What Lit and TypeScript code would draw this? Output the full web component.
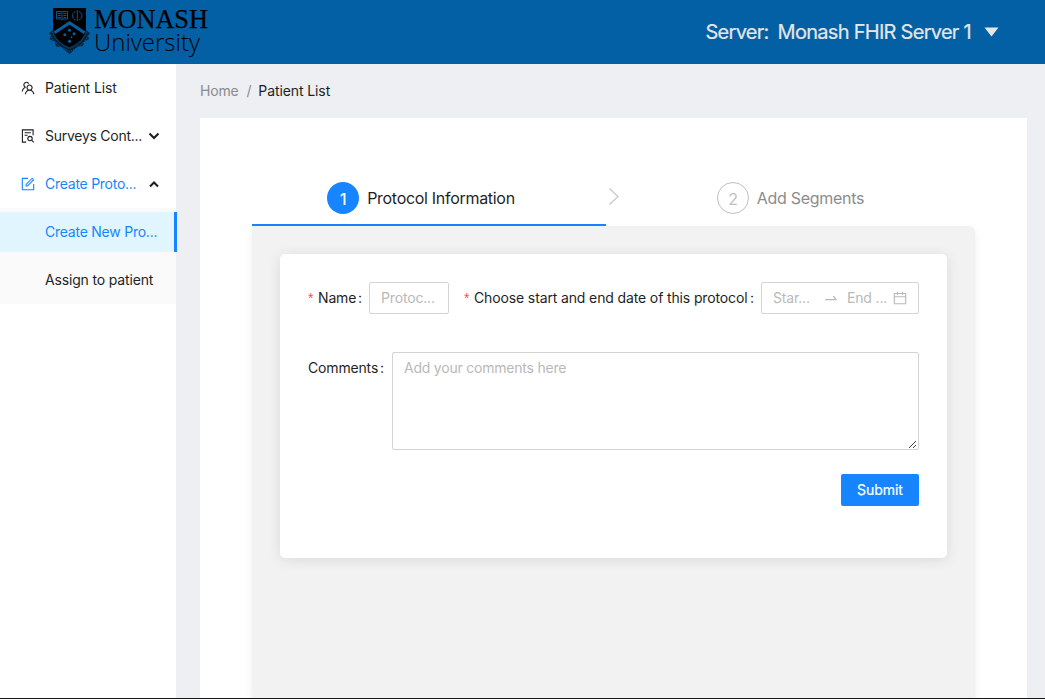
import { LitElement, html, css, svg } from "lit";
import { customElement } from "lit/decorators.js";

const ICONS: Record<string, string[]> = {
  team: [
    "M824.2 699.9a301.55 301.55 0 00-86.4-60.4C783.1 602.8 812 546.8 812 484c0-110.8-92.4-201.7-203.2-200-109.1 1.7-197 90.6-197 200 0 62.8 29 118.8 74.2 155.5a300.95 300.95 0 00-86.4 60.4C345 754.6 314 826.8 312 903.8a8 8 0 008 8.2h56c4.3 0 7.9-3.4 8-7.7 1.9-58 25.4-112.3 66.7-153.5A226.62 226.62 0 01612 684c60.9 0 118.2 23.7 161.3 66.8C814.6 792 838 846.3 840 904.3c.1 4.3 3.7 7.7 8 7.7h56a8 8 0 008-8.2c-2-77-33-149.2-87.8-203.9zM612 612c-34.2 0-66.4-13.3-90.5-37.5a126.86 126.86 0 01-37.5-91.8c.3-32.8 13.4-64.5 36.3-88 24-24.6 56.1-38.3 90.4-38.7 33.9-.3 66.8 12.9 91 36.6 24.8 24.3 38.4 56.8 38.4 91.4 0 34.2-13.3 66.3-37.5 90.5A127.3 127.3 0 01612 612zM361.5 510.4c-.9-8.7-1.4-17.5-1.4-26.4 0-15.9 1.5-31.4 4.3-46.5.7-3.6-1.2-7.3-4.5-8.8-13.6-6.1-26.1-14.5-36.9-25.1a127.54 127.54 0 01-38.7-95.4c.9-32.1 13.8-62.6 36.3-85.6 24.7-25.3 57.9-39.1 93.2-38.7 31.9.3 62.7 12.6 86 34.4 7.9 7.4 14.7 15.6 20.4 24.4 2 3.1 5.9 4.4 9.3 3.2 17.6-6.1 36.2-10.4 55.3-12.4 5.6-.6 8.8-6.6 6.3-11.6-32.5-64.3-98.9-108.7-175.7-109.9-110.9-1.7-203.3 89.2-203.3 199.9 0 62.8 28.9 118.8 74.2 155.5-31.8 14.7-61.1 35-86.5 60.4-54.8 54.7-85.8 126.9-87.8 204a8 8 0 008 8.2h56.1c4.3 0 7.9-3.4 8-7.7 1.9-58 25.4-112.3 66.7-153.5 29.4-29.4 65.4-49.8 104.7-59.7 3.9-1 6.5-4.7 6-8.7z",
  ],
  edit: [
    "M904 512h-56c-4.4 0-8 3.6-8 8v320H184V184h320c4.4 0 8-3.6 8-8v-56c0-4.4-3.6-8-8-8H144c-17.7 0-32 14.3-32 32v736c0 17.7 14.3 32 32 32h736c17.7 0 32-14.3 32-32V520c0-4.4-3.6-8-8-8z",
    "M355.9 534.9L354 653.8c-.1 8.9 7.1 16.2 16 16.2h.4l118-2.9c2-.1 4-.9 5.4-2.3l415.9-415c3.1-3.1 3.1-8.2 0-11.3L785.4 114.3c-1.6-1.6-3.6-2.3-5.7-2.3s-4.1.8-5.7 2.3l-415.8 415a8.3 8.3 0 00-2.3 5.6zm63.5 23.6L779.7 199l45.2 45.1-360.5 359.7-45.7 1.1.7-46.4z",
  ],
  calendar: [
    "M880 184H712v-64c0-4.4-3.6-8-8-8h-56c-4.4 0-8 3.6-8 8v64H384v-64c0-4.4-3.6-8-8-8h-56c-4.4 0-8 3.6-8 8v64H144c-17.7 0-32 14.3-32 32v664c0 17.7 14.3 32 32 32h736c17.7 0 32-14.3 32-32V216c0-17.7-14.3-32-32-32zm-40 656H184V460h656v380zM184 392V256h128v48c0 4.4 3.6 8 8 8h56c4.4 0 8-3.6 8-8v-48h256v48c0 4.4 3.6 8 8 8h56c4.4 0 8-3.6 8-8v-48h128v136H184z",
  ],
  swap: [
    "M873.1 596.2l-164-208A32 32 0 00684 376h-64.8c-6.7 0-10.4 7.7-6.3 13l144.3 183H152c-4.4 0-8 3.6-8 8v60c0 4.4 3.6 8 8 8h695.9c26.8 0 41.7-30.8 25.2-51.8z",
  ],
};

const icon = (name: string, size: number) => html`
  <svg class="icon" width=${size} height=${size} viewBox=${name === "swap" ? "0 0 1024 1024" : "64 64 896 896"} fill="currentColor">
    ${ICONS[name].map((d) => svg`<path d=${d} />`)}
  </svg>
`;

const surveyIcon = html`
  <svg class="icon" width="14" height="14" viewBox="0 0 14 14" fill="none" stroke="currentColor" stroke-width="1.1">
    <path d="M5.2 13.1H1.4V.9h10.7v5.3" />
    <path d="M3.6 3.8h6.2M3.6 6.3h3" />
    <circle cx="9" cy="9.6" r="2.2" />
    <path d="M10.6 11.2l2.2 2.2" />
  </svg>
`;

const chevron = (d: string) => html`
  <svg class="icon" width="12" height="12" viewBox="0 0 12 12" fill="none" stroke="#1d1d1d" stroke-width="2">
    <path d=${d} />
  </svg>
`;

const logo = html`
  <svg class="logo" width="164" height="52" viewBox="0 0 164 52">
    <path d="M6 2h33v21.500c0 8-7 13.500-16.500 18C13 37 6 31.500 6 23.500z" fill="#000" />
    <path d="M2 27l4.500-3c1.500 8 7.500 13.500 16 17.500 8.500-4 14.500-9.500 16-17.500l4.500 3-2 3 1 3-5 3-1 4-5 .5-8.500 7.500L14 41l-5-.5L8 36l-5.500-3 1.500-3z" fill="#03223a" />
    <path d="M3.500 28.500c3 8.500 10 13 19 17 9-4 16-8.500 19-17M5.500 26c3 8.500 9 13 17 16.500 8-3.500 14-8 17-16.500" fill="none" stroke="#0460a5" stroke-width=".8" stroke-dasharray="1.500 1" />
    <path d="M8 16.500h29v7C36 31 30.500 36 22.500 40 14.500 36 9 31 8 23.500z" fill="#000" />
    <path d="M7.500 26.800L22.500 16.800 37.500 26.800" fill="none" stroke="#0460a5" stroke-width="3" />
    <g fill="none" stroke="#0460a5" stroke-width=".9">
      <path d="M9.500 5.500h4.500l1 .7 1-.7h4.500v7.500H16l-1 .7-1-.7H9.500zM15 6.500v6.500M11 7.500h2.800M11 9.500h2.800M11 11.500h2.800M16.500 7.500h2.800M16.500 9.500h2.800M16.500 11.500h2.800" />
      <path d="M28.500 5.500c-4 1.500-4 7 0 8.500M32 5.500c4 1.500 4 7 0 8.500M30.300 4v11" />
    </g>
    <g fill="#0460a5">
      <circle cx="22.500" cy="24.300" r="1.500" />
      <circle cx="17.800" cy="28.800" r="1.500" />
      <circle cx="27" cy="27.800" r="1.500" />
      <circle cx="24.500" cy="31.200" r=".9" />
      <circle cx="22.500" cy="35.300" r="1.600" />
    </g>
    <text class="logo-top" x="47" y="21.500" textLength="114" lengthAdjust="spacingAndGlyphs">MONASH</text>
    <text class="logo-bottom" x="47" y="44.500" textLength="106" lengthAdjust="spacingAndGlyphs">University</text>
  </svg>
`;

@customElement("app-root")
export class AppRoot extends LitElement {
  static styles = css`
    :host {
      display: flex;
      flex-direction: column;
      height: 700px;
      overflow: hidden;
      box-sizing: border-box;
      font-family: Inter, "Liberation Sans", sans-serif;
      font-size: 14px;
      letter-spacing: -0.16px;
      line-height: 22px;
      color: #1f1f1f;
      background: #edeff3;
    }
    * { box-sizing: border-box; }
    .icon { display: block; flex: none; }
    header {
      flex: none;
      height: 64px;
      background: #0460a5;
      display: flex;
      justify-content: space-between;
      padding: 6px 46px 0 47px;
    }
    .logo { display: block; overflow: visible; }
    .logo-top { font: 28px "Liberation Serif", serif; stroke: #000; stroke-width: 0.25px; letter-spacing: 0; }
    .logo-bottom { font: 300 24.5px "Open Sans", sans-serif; letter-spacing: 0; }
    .server {
      display: flex;
      align-items: center;
      height: 52px;
      font-size: 20px;
      letter-spacing: -0.72px;
      color: #e6e6e6;
      -webkit-text-stroke: 0.2px #e6e6e6;
    }
    .server-label { margin-right: 9px; }
    .caret { margin-left: 13px; display: block; }
    .body { flex: 1; display: flex; min-height: 0; }
    aside { width: 176px; flex: none; background: #fff; padding-top: 4px; }
    .item {
      display: flex;
      align-items: center;
      height: 40px;
      margin-bottom: 8px;
      padding-left: 21px;
      white-space: nowrap;
    }
    .label { margin-left: 10px; width: 98px; margin-right: 5px; flex: none; }
    .label.home { letter-spacing: -0.1px; }
    .label.tight { letter-spacing: -0.26px; }
    .item.open { color: #1785ff; margin-bottom: 4px; }
    .submenu { background: #fafafa; padding: 4px 0; height: 96px; }
    .sub { display: flex; align-items: center; height: 40px; padding-left: 45px; white-space: nowrap; }
    .sub.selected {
      width: 177px;
      background: #e1f5ff;
      border-right: 3px solid #1785ff;
      color: #1785ff;
      margin-bottom: 8px;
      letter-spacing: -0.24px;
    }
    main { flex: 1; padding: 16px 18px 0 24px; display: flex; flex-direction: column; min-width: 0; }
    .crumbs { display: flex; gap: 8px; height: 22px; color: #8a8b8d; margin-bottom: 16px; }
    .crumbs span:first-child { letter-spacing: -0.2px; }
    .crumbs .here { color: #1f1f1f; letter-spacing: -0.1px; margin-left: -1px; }
    .panel { flex: 1; background: #fff; padding: 64px 52px 0; display: flex; flex-direction: column; }
    .steps { display: flex; height: 44px; font-size: 16px; letter-spacing: -0.3px; }
    .step { flex: 1; display: flex; justify-content: center; height: 32px; align-items: center; gap: 8px; }
    .step.active { flex: none; width: 354px; height: 44px; padding: 0 20px 10px 4px; padding: 0 16px 10px 0; border-bottom: 2px solid #1785ff; }
    .step.next { color: #8c8c8c; padding-right: 14px; }
    .arrow { margin: 5px 0 0 2px; flex: none; display: block; }
    .num {
      width: 32px;
      height: 32px;
      border-radius: 50%;
      display: grid;
      place-items: center;
      background: #1785ff;
      color: #fff;
      padding-top: 1px;
    }
    .step.active .num { -webkit-text-stroke: 0.2px #fff; }
    .step.next .num { background: #fff; border: 1px solid #bfbfbf; color: #bfbfbf; }
    .content {
      flex: 1;
      background: #f2f2f2;
      border-radius: 0 6px 0 0;
      box-shadow: 0 4px 8px rgba(0, 0, 0, 0.07);
      padding: 28px;
    }
    .form {
      height: 304px;
      background: #fff;
      border-radius: 5px;
      box-shadow: 0 2px 14px rgba(0, 0, 0, 0.1);
      padding: 28px;
    }
    .row { display: flex; align-items: center; height: 32px; white-space: nowrap; margin-bottom: 38px; }
    .star { color: #ff4d4f; font: 14px/14px "Liberation Sans", sans-serif; margin-right: 4px; width: 6px; flex: none; }
    .colon { margin: 0 8px 0 2px; width: 3px; flex: none; }
    .box {
      height: 32px;
      flex: none;
      border: 1px solid #d4d4d4;
      border-radius: 2px;
      padding: 0 11px;
      display: flex;
      align-items: center;
      color: #b9b9b9;
    }
    .name-label { width: 38px; flex: none; }
    .name-box { width: 80px; margin-right: 15px; }
    .date-label { width: 274px; flex: none; letter-spacing: -0.13px; }
    .date-box { width: 158px; margin-left: auto; }
    .date-start { width: 50px; }
    .date-end { width: 46px; margin-left: 8px; }
    .comments { display: flex; height: 98px; margin-bottom: 24px; }
    .comments-label { width: 70px; padding-top: 5px; }
    .comments .colon { padding-top: 5px; width: 5px; margin-right: 7px; }
    .area {
      flex: 1;
      border: 1px solid #d4d4d4;
      border-radius: 2px;
      padding: 4px 0 0 11px;
      color: #b9b9b9;
      letter-spacing: -0.22px;
      display: flex;
      justify-content: space-between;
    }
    .grip { align-self: flex-end; display: block; }
    .submit {
      display: block;
      margin-left: auto;
      width: 78px;
      height: 32px;
      border: 0;
      border-radius: 2px;
      background: #1785ff;
      color: #fff;
      font: inherit;
      letter-spacing: -0.05px;
      -webkit-text-stroke: 0.2px #fff;
      padding: 0;
    }
    footer { flex: none; height: 2px; background: #15161c; border-bottom: 1px solid #fff; }
  `;

  render() {
    return html`
      <header>
        ${logo}
        <div class="server">
          <span class="server-label">Server:</span><span>Monash FHIR Server 1</span>
          <svg class="caret" width="15" height="10" viewBox="0 0 15 10"><path d="M.5.5h14L7.500 9.500z" fill="#e6e6e6" /></svg>
        </div>
      </header>
      <div class="body">
        <aside>
          <div class="item">${icon("team", 14)}<span class="label home">Patient List</span></div>
          <div class="item">${surveyIcon}<span class="label tight">Surveys Cont...</span>${chevron("M1.500 3.500L6 8l4.500-4.500")}</div>
          <div class="item open">${icon("edit", 14)}<span class="label tight">Create Proto...</span>${chevron("M2 8.500l4-4 4 4")}</div>
          <div class="submenu">
            <div class="sub selected">Create New Pro...</div>
            <div class="sub">Assign to patient</div>
          </div>
        </aside>
        <main>
          <div class="crumbs"><span>Home</span><span>/</span><span class="here">Patient List</span></div>
          <section class="panel">
            <div class="steps">
              <div class="step active"><span class="num">1</span><span>Protocol Information</span></div>
              <svg class="arrow" width="12" height="20" viewBox="0 0 12 20" fill="none" stroke="#c4c4c4" stroke-width="1.100">
                <path d="M1.500 1.500L10 9.500 1.500 17.500" />
              </svg>
              <div class="step next"><span class="num">2</span><span>Add Segments</span></div>
            </div>
            <div class="content">
              <div class="form">
                <div class="row">
                  <span class="star">*</span><span class="name-label">Name</span><span class="colon">:</span>
                  <div class="box name-box">Protoc...</div>
                  <span class="star">*</span><span class="date-label">Choose start and end date of this protocol</span><span class="colon">:</span>
                  <div class="box date-box">
                    <span class="date-start">Star...</span>${icon("swap", 16)}<span class="date-end">End ...</span>${icon("calendar", 14)}
                  </div>
                </div>
                <div class="comments">
                  <span class="comments-label">Comments</span><span class="colon">:</span>
                  <div class="area">
                    <span>Add your comments here</span>
                    <svg class="grip" width="10" height="10" viewBox="0 0 10 10" stroke="#444" stroke-width="1"><path d="M1 9l7-7M5 9l3-3" /></svg>
                  </div>
                </div>
                <button class="submit">Submit</button>
              </div>
            </div>
          </section>
        </main>
      </div>
      <footer></footer>
    `;
  }
}
